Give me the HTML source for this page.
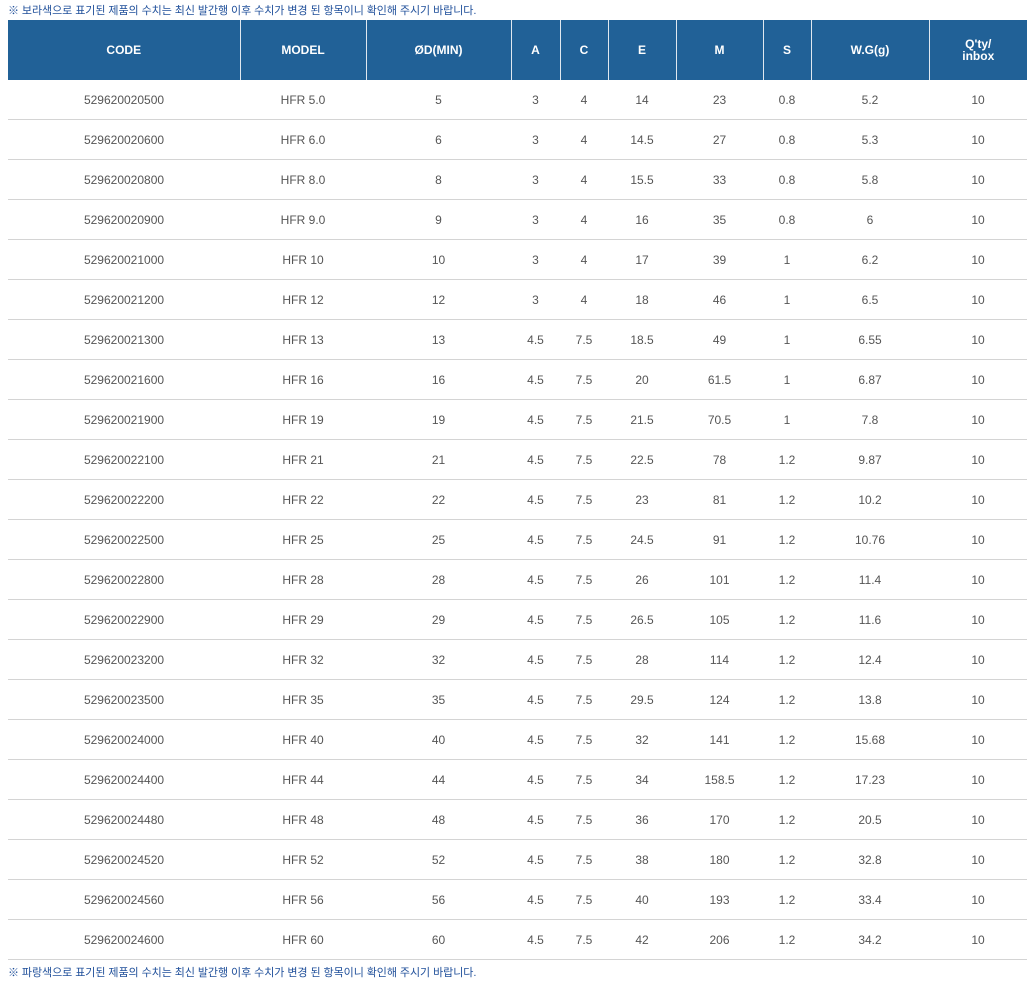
<!DOCTYPE html>
<html><head><meta charset="utf-8"><style>
body{margin:0;background:#fff;font-family:"Liberation Sans","Noto Sans CJK KR",sans-serif;}
.note{position:absolute;left:8px;font-size:11px;color:#1f4f9a;line-height:14px;letter-spacing:-0.06px}
table{position:absolute;left:8px;top:20px;border-collapse:collapse;table-layout:fixed;width:1019px}
th{background:#216197;color:#fff;font-size:12px;font-weight:bold;height:60px;padding:0;border-left:1px solid #e0e8f0;line-height:12px}
th:first-child{border-left:none}
td{height:39px;padding:0;text-align:center;font-size:12px;color:#555;border-bottom:1px solid #d4d4d4}
</style></head><body>
<div class="note" style="top:4px">※ 보라색으로 표기된 제품의 수치는 최신 발간행 이후 수치가 변경 된 항목이니 확인해 주시기 바랍니다.</div>
<table>
<colgroup><col style="width:232px"><col style="width:126px"><col style="width:145px"><col style="width:49px"><col style="width:48px"><col style="width:68px"><col style="width:87px"><col style="width:48px"><col style="width:118px"><col style="width:98px"></colgroup>
<tr><th>CODE</th><th>MODEL</th><th>ØD(MIN)</th><th>A</th><th>C</th><th>E</th><th>M</th><th>S</th><th>W.G(g)</th><th>Q'ty/<br>inbox</th></tr>
<tr><td>529620020500</td><td>HFR 5.0</td><td>5</td><td>3</td><td>4</td><td>14</td><td>23</td><td>0.8</td><td>5.2</td><td>10</td></tr>
<tr><td>529620020600</td><td>HFR 6.0</td><td>6</td><td>3</td><td>4</td><td>14.5</td><td>27</td><td>0.8</td><td>5.3</td><td>10</td></tr>
<tr><td>529620020800</td><td>HFR 8.0</td><td>8</td><td>3</td><td>4</td><td>15.5</td><td>33</td><td>0.8</td><td>5.8</td><td>10</td></tr>
<tr><td>529620020900</td><td>HFR 9.0</td><td>9</td><td>3</td><td>4</td><td>16</td><td>35</td><td>0.8</td><td>6</td><td>10</td></tr>
<tr><td>529620021000</td><td>HFR 10</td><td>10</td><td>3</td><td>4</td><td>17</td><td>39</td><td>1</td><td>6.2</td><td>10</td></tr>
<tr><td>529620021200</td><td>HFR 12</td><td>12</td><td>3</td><td>4</td><td>18</td><td>46</td><td>1</td><td>6.5</td><td>10</td></tr>
<tr><td>529620021300</td><td>HFR 13</td><td>13</td><td>4.5</td><td>7.5</td><td>18.5</td><td>49</td><td>1</td><td>6.55</td><td>10</td></tr>
<tr><td>529620021600</td><td>HFR 16</td><td>16</td><td>4.5</td><td>7.5</td><td>20</td><td>61.5</td><td>1</td><td>6.87</td><td>10</td></tr>
<tr><td>529620021900</td><td>HFR 19</td><td>19</td><td>4.5</td><td>7.5</td><td>21.5</td><td>70.5</td><td>1</td><td>7.8</td><td>10</td></tr>
<tr><td>529620022100</td><td>HFR 21</td><td>21</td><td>4.5</td><td>7.5</td><td>22.5</td><td>78</td><td>1.2</td><td>9.87</td><td>10</td></tr>
<tr><td>529620022200</td><td>HFR 22</td><td>22</td><td>4.5</td><td>7.5</td><td>23</td><td>81</td><td>1.2</td><td>10.2</td><td>10</td></tr>
<tr><td>529620022500</td><td>HFR 25</td><td>25</td><td>4.5</td><td>7.5</td><td>24.5</td><td>91</td><td>1.2</td><td>10.76</td><td>10</td></tr>
<tr><td>529620022800</td><td>HFR 28</td><td>28</td><td>4.5</td><td>7.5</td><td>26</td><td>101</td><td>1.2</td><td>11.4</td><td>10</td></tr>
<tr><td>529620022900</td><td>HFR 29</td><td>29</td><td>4.5</td><td>7.5</td><td>26.5</td><td>105</td><td>1.2</td><td>11.6</td><td>10</td></tr>
<tr><td>529620023200</td><td>HFR 32</td><td>32</td><td>4.5</td><td>7.5</td><td>28</td><td>114</td><td>1.2</td><td>12.4</td><td>10</td></tr>
<tr><td>529620023500</td><td>HFR 35</td><td>35</td><td>4.5</td><td>7.5</td><td>29.5</td><td>124</td><td>1.2</td><td>13.8</td><td>10</td></tr>
<tr><td>529620024000</td><td>HFR 40</td><td>40</td><td>4.5</td><td>7.5</td><td>32</td><td>141</td><td>1.2</td><td>15.68</td><td>10</td></tr>
<tr><td>529620024400</td><td>HFR 44</td><td>44</td><td>4.5</td><td>7.5</td><td>34</td><td>158.5</td><td>1.2</td><td>17.23</td><td>10</td></tr>
<tr><td>529620024480</td><td>HFR 48</td><td>48</td><td>4.5</td><td>7.5</td><td>36</td><td>170</td><td>1.2</td><td>20.5</td><td>10</td></tr>
<tr><td>529620024520</td><td>HFR 52</td><td>52</td><td>4.5</td><td>7.5</td><td>38</td><td>180</td><td>1.2</td><td>32.8</td><td>10</td></tr>
<tr><td>529620024560</td><td>HFR 56</td><td>56</td><td>4.5</td><td>7.5</td><td>40</td><td>193</td><td>1.2</td><td>33.4</td><td>10</td></tr>
<tr><td>529620024600</td><td>HFR 60</td><td>60</td><td>4.5</td><td>7.5</td><td>42</td><td>206</td><td>1.2</td><td>34.2</td><td>10</td></tr>
</table>
<div class="note" style="top:966px">※ 파랑색으로 표기된 제품의 수치는 최신 발간행 이후 수치가 변경 된 항목이니 확인해 주시기 바랍니다.</div>
</body></html>
